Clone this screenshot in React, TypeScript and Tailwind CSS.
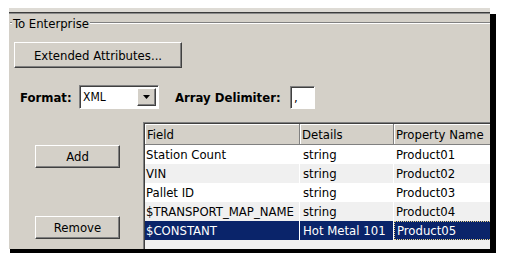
import React from "react";

const raised =
  "bg-[#d4d0c8] border border-t-white border-l-white border-r-[#404040] border-b-[#404040] shadow-[inset_-1px_-1px_0_#808080]";
const sunken =
  "border border-t-[#808080] border-l-[#808080] border-r-white border-b-white shadow-[inset_1px_1px_0_#404040]";

const rows = [
  { field: "Station Count", details: "string", prop: "Product01" },
  { field: "VIN", details: "string", prop: "Product02" },
  { field: "Pallet ID", details: "string", prop: "Product03" },
  { field: "$TRANSPORT_MAP_NAME", details: "string", prop: "Product04" },
  { field: "$CONSTANT", details: "Hot Metal 101", prop: "Product05" },
];

function Button({ label, className }: { label: string; className: string }) {
  return (
    <div className={`${raised} flex items-center justify-center ${className}`}>
      {label}
    </div>
  );
}

function GridLine() {
  return <div className="h-[2px] border-t border-t-[#808080] border-b border-b-white" />;
}

export default function App() {
  return (
    <div className="w-[510px] h-[266px] bg-white pt-2 pl-[9px] text-black text-[13px] leading-none font-['DejaVu_Sans_Condensed','DejaVu_Sans',sans-serif] overflow-hidden">
      <div className="flex w-[487px]">
        <div className="w-[481px] h-[241px] bg-[#d4d0c8] flex flex-col overflow-hidden">
          {/* top window edge */}
          <div className="h-[4px] bg-[#dedbd5]" />
          <div className="h-[1px] bg-[#3c3c3c]" />
          <div className="h-[1px] bg-[#8a8a8a]" />

          {/* group header */}
          <div className="mt-[2px] h-[14px] flex items-center pl-[1px]">
            <div className="w-[2px]">
              <GridLine />
            </div>
            <span className="px-[1px]">To Enterprise</span>
            <div className="flex-1">
              <GridLine />
            </div>
          </div>

          <Button label="Extended Attributes..." className="mt-[12px] ml-[5px] w-[168px] h-[26px]" />

          {/* format row */}
          <div className="mt-[17px] flex items-center h-[24px]">
            <span className="ml-[11px] w-[59px] font-bold">Format:</span>
            <div className={`${sunken} w-[80px] h-[24px] bg-white flex items-stretch p-[2px]`}>
              <span className="flex-1 flex items-center pl-[1px] text-[12px]">XML</span>
              <div className={`${raised} w-[19px] flex items-center justify-center`}>
                <svg width="7" height="4" viewBox="0 0 7 4">
                  <path d="M0 0h7L3.5 4z" fill="#000" />
                </svg>
              </div>
            </div>
            <span className="ml-[16px] w-[115px] font-bold">Array Delimiter:</span>
            <div className={`${sunken} w-[25px] h-[23px] bg-white flex items-center pl-[3px]`}>
              ,
            </div>
          </div>

          {/* lower section */}
          <div className="mt-[13px] flex flex-1 min-h-0">
            <div className="w-[134px] flex flex-col">
              <Button label="Add" className="mt-[23px] ml-[26px] w-[85px] h-[23px]" />
              <Button label="Remove" className="mt-[48px] ml-[26px] w-[85px] h-[23px]" />
            </div>
            <div className="flex-1 overflow-hidden border-t border-l border-[#808080] shadow-[inset_1px_1px_0_#404040] pt-[1px] pl-[1px] bg-[#f0f0f0]">
              <div className="flex h-[21px] bg-[#d4d0c8]">
                <div className="w-[155px] shrink-0 flex items-center pl-[2px] border-r border-b border-[#808080] shadow-[inset_1px_1px_0_#fff]">
                  Field
                </div>
                <div className="w-[94px] shrink-0 flex items-center pl-[2px] border-r border-b border-[#808080] shadow-[inset_1px_1px_0_#fff]">
                  Details
                </div>
                <div className="w-[120px] shrink-0 flex items-center pl-[2px] border-r border-b border-[#808080] shadow-[inset_1px_1px_0_#fff]">
                  Property Name
                </div>
              </div>
              {rows.map((r, i) => {
                const selected = i === 4;
                const bg = selected ? "bg-[#0a246a] text-white" : i % 2 === 0 ? "bg-white" : "bg-[#f0f0f0]";
                return (
                  <div key={r.field} className={`flex h-[19px] ${bg}`}>
                    <div className="w-[155px] shrink-0 flex items-center pl-[1px] border-r border-white whitespace-nowrap overflow-hidden">
                      {r.field}
                    </div>
                    <div className="w-[94px] shrink-0 flex items-center pl-[3px] border-r border-white whitespace-nowrap">
                      {r.details}
                    </div>
                    <div
                      className={`w-[120px] shrink-0 flex items-center pl-[2px] whitespace-nowrap ${
                        selected ? "border border-dotted border-[#e6d38a]" : ""
                      }`}
                    >
                      {r.prop}
                    </div>
                  </div>
                );
              })}
            </div>
          </div>
        </div>
        <div className="w-[6px] mt-[6px] bg-black" />
      </div>
      <div className="ml-[1px] w-[486px] h-[4px] bg-black" />
    </div>
  );
}
